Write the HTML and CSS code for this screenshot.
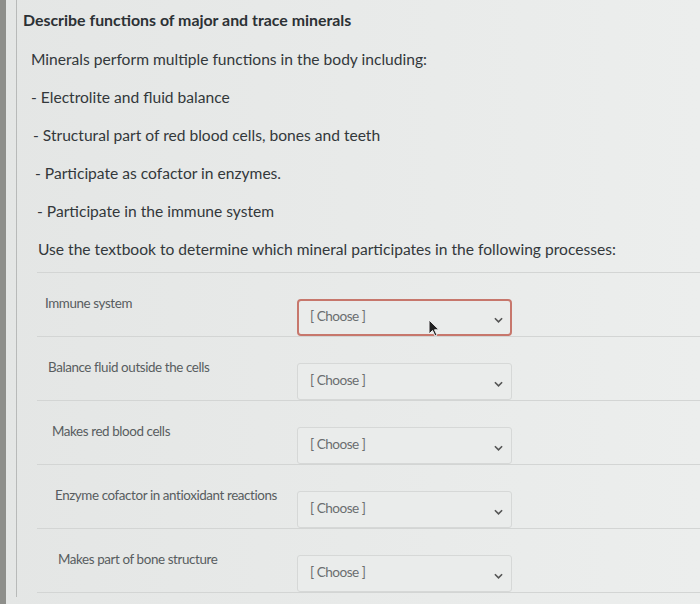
FILE: index.html
```html
<!DOCTYPE html>
<html>
<head>
<meta charset="utf-8">
<link rel="stylesheet" href="styles.css">
</head>
<body>
<div class="edge"></div>
<div class="question">
  <h1 class="title">Describe functions of major and trace minerals</h1>
  <div class="text">
    <p class="lead">Minerals perform multiple functions in the body including:</p>
    <p class="item i1">- Electrolite and fluid balance</p>
    <p class="item i2">- Structural part of red blood cells, bones and teeth</p>
    <p class="item i3">- Participate as cofactor in enzymes.</p>
    <p class="item i4">- Participate in the immune system</p>
    <p class="item i5">Use the textbook to determine which mineral participates in the following processes:</p>
  </div>
  <div class="matches">
    <div class="row r1">
      <div class="label">Immune system</div>
      <div class="select active"><span>[ Choose ]</span><svg class="chev" viewBox="0 0 10 6" width="9" height="6"><path d="M1 1l4 4 4-4" fill="none" stroke="#555" stroke-width="1.8"/></svg></div>
    </div>
    <div class="row r2">
      <div class="label">Balance fluid outside the cells</div>
      <div class="select"><span>[ Choose ]</span><svg class="chev" viewBox="0 0 10 6" width="9" height="6"><path d="M1 1l4 4 4-4" fill="none" stroke="#555" stroke-width="1.8"/></svg></div>
    </div>
    <div class="row r3">
      <div class="label">Makes red blood cells</div>
      <div class="select"><span>[ Choose ]</span><svg class="chev" viewBox="0 0 10 6" width="9" height="6"><path d="M1 1l4 4 4-4" fill="none" stroke="#555" stroke-width="1.8"/></svg></div>
    </div>
    <div class="row r4">
      <div class="label">Enzyme cofactor in antioxidant reactions</div>
      <div class="select"><span>[ Choose ]</span><svg class="chev" viewBox="0 0 10 6" width="9" height="6"><path d="M1 1l4 4 4-4" fill="none" stroke="#555" stroke-width="1.8"/></svg></div>
    </div>
    <div class="row r5">
      <div class="label">Makes part of bone structure</div>
      <div class="select"><span>[ Choose ]</span><svg class="chev" viewBox="0 0 10 6" width="9" height="6"><path d="M1 1l4 4 4-4" fill="none" stroke="#555" stroke-width="1.8"/></svg></div>
    </div>
  </div>
</div>
<svg class="cursor" viewBox="0 0 12 18" width="12" height="18"><path d="M1 1v14l3.5-3.5 2.5 5.5 2-1-2.5-5.2H11z" fill="#222" stroke="#eee" stroke-width="1"/></svg>
</body>
</html>
```

FILE: styles.css
```css
html, body {
  margin: 0;
  padding: 0;
}
body {
  width: 700px;
  height: 604px;
  overflow: hidden;
  display: flex;
  background: linear-gradient(90deg, #e4e6e5 0%, #e8eae9 50%, #eceeed 100%);
  font-family: Lato, "Noto Sans", sans-serif;
  color: #33383b;
  position: relative;
}
.edge {
  width: 6px;
  flex: none;
  background: #8e8f8b;
}
.question {
  flex: 1;
  margin-left: 10px;
  border-left: 1px solid #b8bab9;
  padding-left: 6px;
  height: 597px;
  display: flex;
  flex-direction: column;
}
.title {
  margin: 8px 0 0 0;
  font-size: 15.9px;
  line-height: 24px;
  font-weight: 700;
  color: #2c3135;
}
.text {
  padding-left: 8px;
  padding-bottom: 11px;
}
.text p {
  margin: 0;
  font-size: 15.6px;
  line-height: 24px;
}
.lead {
  margin-top: 15px !important;
}
.item {
  margin-top: 14px !important;
}
.i2 { padding-left: 2px; }
.i3 { padding-left: 4px; }
.i4 { padding-left: 6px; }
.i5 { padding-left: 7px; }
.matches {
  margin-left: 14px;
  border-top: 1px solid #d3d5d4;
}
.row {
  height: 64px;
  border-bottom: 1px solid #d3d5d4;
  display: grid;
  grid-template-columns: 260px 215px;
  align-items: start;
  box-sizing: border-box;
  padding-top: 21px;
}
.label {
  padding-left: 8px;
  font-size: 13.4px;
  letter-spacing: -0.4px;
  line-height: 18px;
  color: #585d60;
}
.r2 .label { padding-left: 11px; }
.r3 .label { padding-left: 15px; }
.r4 .label { padding-left: 18px; }
.r5 .label { padding-left: 21px; }
.select {
  margin-top: 5px;
  height: 37px;
  box-sizing: border-box;
  border: 1px solid #d6d8d7;
  border-radius: 3px;
  background: #eaeceb;
  display: flex;
  align-items: center;
  justify-content: space-between;
  padding: 0 8px 0 12px;
  font-size: 13.6px;
  letter-spacing: -0.5px;
  color: #6a6e70;
}
.select span {
  margin-top: -4px;
}
.select.active {
  border: 2px solid #c7776c;
  border-radius: 4px;
  padding-left: 11px;
  padding-right: 7px;
}
.chev {
  margin-top: 4px;
}
.cursor {
  position: absolute;
  left: 428px;
  top: 319px;
}
```
